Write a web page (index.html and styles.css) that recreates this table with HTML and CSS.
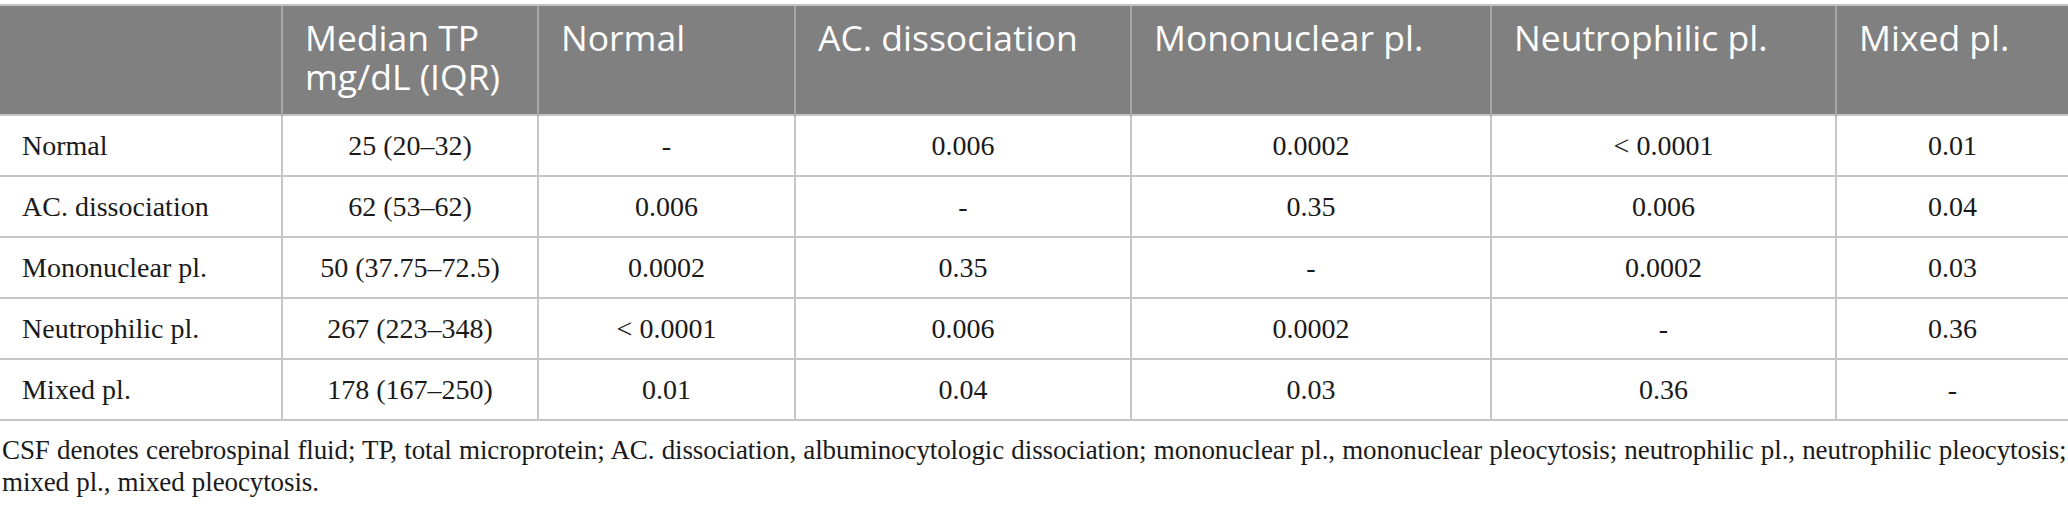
FILE: index.html
```html
<!DOCTYPE html>
<html lang="en">
<head>
<meta charset="utf-8">
<title>CSF total protein comparison</title>
<link rel="stylesheet" href="styles.css">
</head>
<body>
<div class="wrap">
  <table class="data">
    <colgroup>
      <col class="c0"><col class="c1"><col class="c2"><col class="c3"><col class="c4"><col class="c5"><col class="c6">
    </colgroup>
    <thead>
      <tr>
        <th></th>
        <th>Median TP mg/dL (IQR)</th>
        <th>Normal</th>
        <th>AC. dissociation</th>
        <th>Mononuclear pl.</th>
        <th>Neutrophilic pl.</th>
        <th>Mixed pl.</th>
      </tr>
    </thead>
    <tbody>
      <tr><td class="lbl">Normal</td><td>25 (20–32)</td><td>-</td><td>0.006</td><td>0.0002</td><td>&lt; 0.0001</td><td>0.01</td></tr>
      <tr><td class="lbl">AC. dissociation</td><td>62 (53–62)</td><td>0.006</td><td>-</td><td>0.35</td><td>0.006</td><td>0.04</td></tr>
      <tr><td class="lbl">Mononuclear pl.</td><td>50 (37.75–72.5)</td><td>0.0002</td><td>0.35</td><td>-</td><td>0.0002</td><td>0.03</td></tr>
      <tr><td class="lbl">Neutrophilic pl.</td><td>267 (223–348)</td><td>&lt; 0.0001</td><td>0.006</td><td>0.0002</td><td>-</td><td>0.36</td></tr>
      <tr><td class="lbl">Mixed pl.</td><td>178 (167–250)</td><td>0.01</td><td>0.04</td><td>0.03</td><td>0.36</td><td>-</td></tr>
    </tbody>
  </table>
  <p class="note">CSF denotes cerebrospinal fluid; TP, total microprotein; AC. dissociation, albuminocytologic dissociation; mononuclear pl., mononuclear pleocytosis; neutrophilic pl., neutrophilic pleocytosis; mixed pl., mixed pleocytosis.</p>
</div>
</body>
</html>
```
FILE: styles.css
```css
html, body {
  margin: 0;
  padding: 0;
  background: #ffffff;
}
.wrap {
  padding-top: 4px;
  width: 2068px;
}
.data {
  width: 2068px;
  border-collapse: collapse;
  table-layout: fixed;
  font-family: "Liberation Serif", "Times New Roman", serif;
  font-size: 28px;
  color: #1a1a1a;
}
.c0 { width: 282px; }
.c1 { width: 256px; }
.c2 { width: 257px; }
.c3 { width: 336px; }
.c4 { width: 360px; }
.c5 { width: 345px; }
.c6 { width: 232px; }
.data thead tr { height: 110px; }
.data th {
  background: #808080;
  color: #ffffff;
  font-family: "Open Sans", "Noto Sans", sans-serif;
  font-weight: 400;
  font-size: 35.5px;
  line-height: 39px;
  letter-spacing: 0;
  text-align: left;
  vertical-align: top;
  padding: 12px 20px 0 22px;
  border-top: 2px solid #c2c2c2;
  border-left: 2px solid #a6a6a6;
}
.data th:first-child { border-left: none; }
.data tbody tr { height: 61px; }
.data td {
  padding: 0 10px;
  text-align: center;
  vertical-align: middle;
  line-height: 31px;
  border-top: 2px solid #c6c6c6;
  border-bottom: 2px solid #c6c6c6;
  border-left: 2px solid #c6c6c6;
}
.data td:first-child { border-left: none; }
.data td.lbl {
  text-align: left;
  padding-left: 22px;
}
.note {
  margin: 13px 0 0 2px;
  font-family: "Liberation Serif", "Times New Roman", serif;
  font-size: 27px;
  letter-spacing: -0.1px;
  word-spacing: 0.6px;
  line-height: 32px;
  color: #1a1a1a;
}
```
